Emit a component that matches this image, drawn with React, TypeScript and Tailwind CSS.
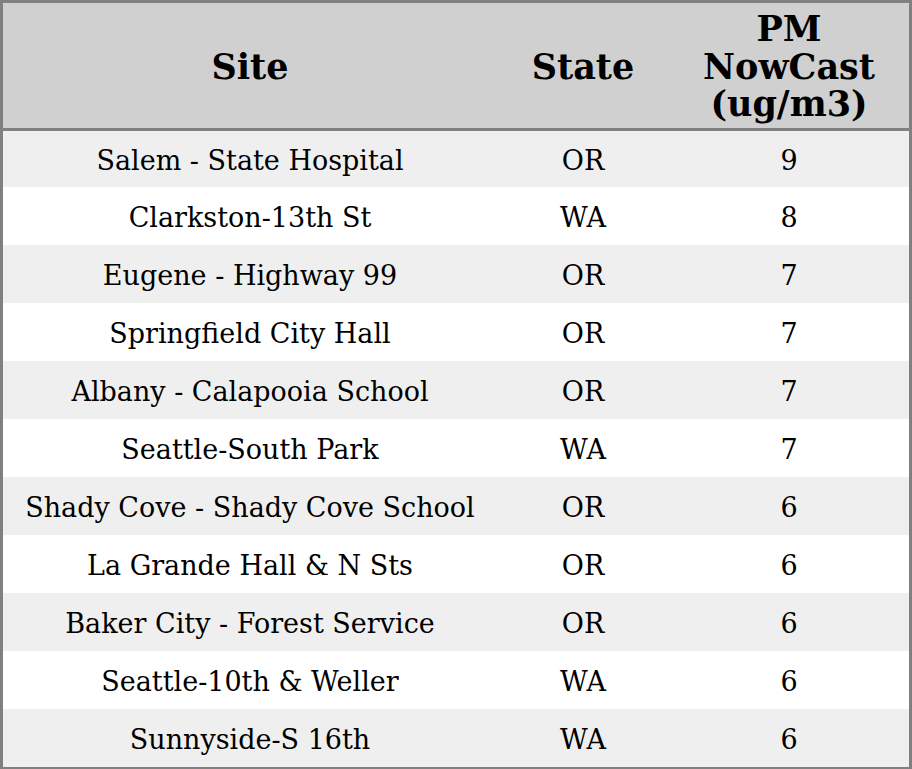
import React from 'react';

interface Reading {
  site: string;
  state: string;
  pm: number;
}

const readings: Reading[] = [
  { site: 'Salem - State Hospital', state: 'OR', pm: 9 },
  { site: 'Clarkston-13th St', state: 'WA', pm: 8 },
  { site: 'Eugene - Highway 99', state: 'OR', pm: 7 },
  { site: 'Springfield City Hall', state: 'OR', pm: 7 },
  { site: 'Albany - Calapooia School', state: 'OR', pm: 7 },
  { site: 'Seattle-South Park', state: 'WA', pm: 7 },
  { site: 'Shady Cove - Shady Cove School', state: 'OR', pm: 6 },
  { site: 'La Grande Hall & N Sts', state: 'OR', pm: 6 },
  { site: 'Baker City - Forest Service', state: 'OR', pm: 6 },
  { site: 'Seattle-10th & Weller', state: 'WA', pm: 6 },
  { site: 'Sunnyside-S 16th', state: 'WA', pm: 6 },
];

const App: React.FC = () => {
  return (
    <div className="w-[912px] font-['DejaVu_Serif',serif] text-black">
      <div className="border-[3px] border-[#808080]">
        {/* Header */}
        <div className="grid h-[128px] grid-cols-[494px_172px_240px] items-center border-b-[3px] border-[#808080] bg-[#d0d0d0] pt-[2px] text-center text-[35px] font-bold leading-[37.5px]">
          <div>Site</div>
          <div>State</div>
          <div>
            PM
            <br />
            NowCast
            <br />
            (ug/m3)
          </div>
        </div>

        {/* Rows */}
        {readings.map((r, idx) => (
          <div
            key={r.site}
            className={`grid grid-cols-[494px_172px_240px] items-center pt-1 text-center text-[27px] ${
              idx === 0 ? 'h-[56px]' : 'h-[58px]'
            } ${idx % 2 === 0 ? 'bg-[#efefef]' : 'bg-white'}`}
          >
            <div>{r.site}</div>
            <div>{r.state}</div>
            <div>{r.pm}</div>
          </div>
        ))}
      </div>
    </div>
  );
};

export default App;
